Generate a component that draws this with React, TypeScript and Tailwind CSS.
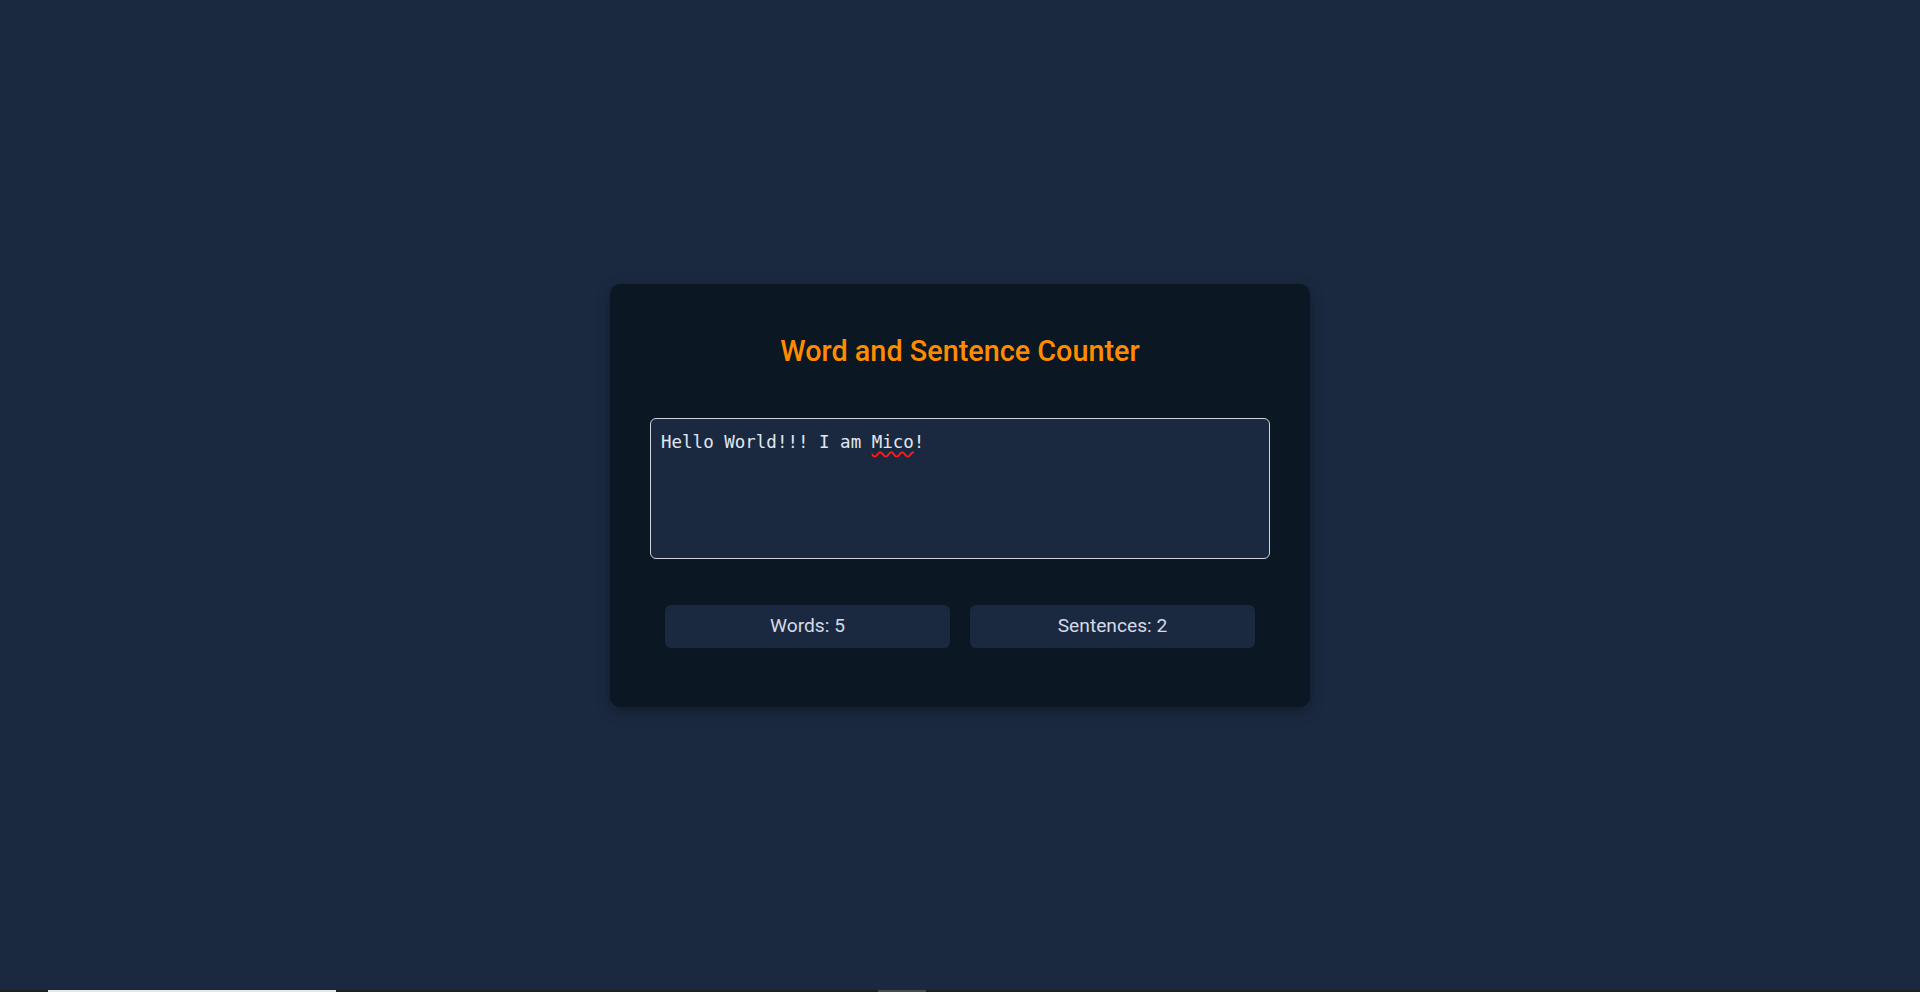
import React, { useState } from 'react';

function countWords(text: string) {
  const parts = text.trim().split(/\s+/).filter(Boolean);
  return parts.length;
}

function countSentences(text: string) {
  const parts = text.split(/[.!?]+/).filter(s => s.trim().length > 0);
  return parts.length;
}

export default function App() {
  const [text, setText] = useState('Hello World!!! I am Mico!');

  return (
    <div className="min-h-screen flex flex-col bg-[#1b2940] font-['Roboto',sans-serif]">
      <main className="flex-1 flex items-center justify-center">
        <div className="w-[700px] rounded-[10px] bg-[#0b1722] p-10 shadow-[0_4px_14px_rgba(0,0,0,0.35)]">
          <h1 className="mt-[10px] mb-[50px] text-center text-[28.8px] leading-[34px] font-medium text-[#ff8c00]">
            Word and Sentence Counter
          </h1>

          <div className="relative">
            <textarea
              value={text}
              onChange={e => setText(e.target.value)}
              spellCheck={false}
              className="block w-full h-[141px] resize-none rounded-md border border-[#cdd2da] bg-[#1b2940] p-[10px] text-[17.5px] leading-normal text-[#e1e7f0] outline-none font-['DejaVu_Sans_Mono',monospace]"
            />
            {/* spellcheck squiggle on the name */}
            <div className="pointer-events-none absolute inset-0 border border-transparent p-[10px] text-[17.5px] leading-normal text-transparent font-['DejaVu_Sans_Mono',monospace] whitespace-pre">
              {'Hello World!!! I am '}
              <span className="underline decoration-wavy decoration-[#ff1a1a] decoration-[1.5px] underline-offset-[3px]">Mico</span>
            </div>
          </div>

          <div className="mt-[46px] mb-[19px] flex gap-5 px-[15px]">
            <div className="flex-1 h-[43px] flex items-center justify-center rounded-md bg-[#1b2940] text-[19.2px] text-[#d3dbe8]">
              Words: {countWords(text)}
            </div>
            <div className="flex-1 h-[43px] flex items-center justify-center rounded-md bg-[#1b2940] text-[19.2px] text-[#d3dbe8]">
              Sentences: {countSentences(text)}
            </div>
          </div>
        </div>
      </main>

      <div className="flex h-[2px] bg-[#1f1f1f]">
        <div className="w-[48px]" />
        <div className="w-[288px] bg-[#e8e8e8]" />
        <div className="w-[542px]" />
        <div className="w-[48px] bg-[#4a4a4a]" />
      </div>
    </div>
  );
}
